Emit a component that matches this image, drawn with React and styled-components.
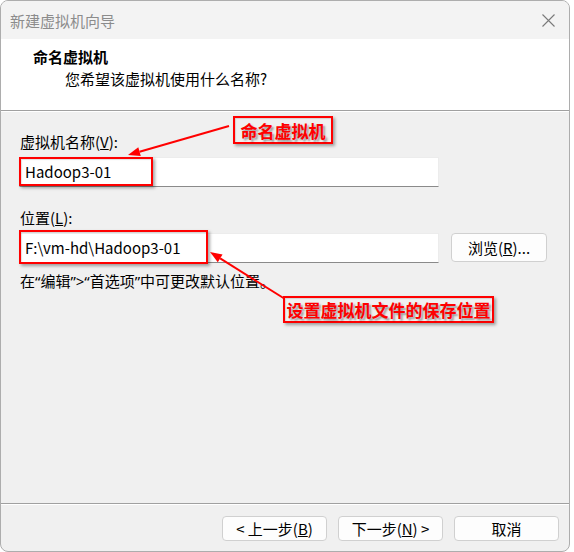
import React from 'react'
import styled, { createGlobalStyle } from 'styled-components'

const GlobalStyle = createGlobalStyle`
  html, body {
    margin: 0;
    padding: 0;
    background: #fff;
  }
  body {
    font-family: "Noto Sans CJK SC", "Noto Sans", sans-serif;
    font-size: 15px;
    color: #000;
  }
`

const FONT = `"Noto Sans CJK SC", "Noto Sans", sans-serif`

const Page = styled.div`
  position: relative;
  width: 574px;
  height: 552px;
`

const Window = styled.div`
  width: 570px;
  height: 552px;
  box-sizing: border-box;
  border: 1px solid #adadad;
  border-radius: 8px;
  overflow: hidden;
  display: flex;
  flex-direction: column;
  background: #f0f0f0;
`

const TitleBar = styled.div`
  height: 38px;
  flex: none;
  display: flex;
  align-items: center;
  justify-content: space-between;
  padding: 0 14px 0 9px;
  background: #f3f3f3;
  color: #8c8c8c;
  font-size: 15px;
`

const Header = styled.div`
  height: 71px;
  flex: none;
  box-sizing: border-box;
  padding: 8px 0 0 32px;
  background: #fff;
  line-height: 20px;

  h1 {
    margin: 0;
    font-size: 15px;
    font-weight: 700;
  }

  p {
    margin: 2px 0 0 32px;
  }
`

const Separator = styled.div`
  height: 2px;
  flex: none;
  box-sizing: border-box;
  border-top: 1px solid #a0a0a0;
  border-bottom: 1px solid #fff;
`

const Body = styled.div`
  flex: 1;
  padding: 20px 0 0 18px;
  line-height: 20px;
`

const Label = styled.div`
  padding-left: 1px;
`

const Row = styled.div`
  display: flex;
  align-items: flex-start;
  gap: 12px;
  margin: 5px 0 ${({ $after }) => $after}px;
`

const Input = styled.div`
  width: 420px;
  height: 30px;
  box-sizing: border-box;
  background: #fff;
  border: 1px solid #ececec;
  border-bottom-color: #8a8a8a;
  padding-left: 5px;
  display: flex;
  align-items: center;
  font-size: 15px;
`

const Button = styled.button`
  width: ${({ $w }) => $w}px;
  height: ${({ $h }) => $h}px;
  box-sizing: border-box;
  background: #fdfdfd;
  border: 1px solid #d0d0d0;
  border-radius: 4px;
  font-family: ${FONT};
  font-size: 15px;
  color: #000;
  padding: 0;
  display: flex;
  align-items: center;
  justify-content: center;
`

/* quotes in the Windows UI font are narrow, so Latin font first here */
const Note = styled.div`
  padding-left: 1px;
  font-family: "Noto Sans", "Noto Sans CJK SC", sans-serif;
`

const Footer = styled.div`
  height: 46px;
  flex: none;
  box-sizing: border-box;
  padding: 11px 10px 0 0;
  display: flex;
  justify-content: flex-end;
  gap: 11px;
`

const RedBox = styled.div`
  position: absolute;
  left: ${({ $x }) => $x}px;
  top: ${({ $y }) => $y}px;
  width: ${({ $w }) => $w}px;
  height: ${({ $h }) => $h}px;
  box-sizing: border-box;
  border: 2px solid #f00;
  box-shadow: 2px 2px 3px rgba(0, 0, 0, 0.35), inset 1px 1px 1px rgba(0, 0, 0, 0.12);
  pointer-events: none;
`

const Callout = styled(RedBox)`
  display: flex;
  align-items: center;
  justify-content: center;
  background: #f0f0f0;
  color: #f00;
  font-family: ${FONT};
  font-size: 17px;
  font-weight: 700;
  line-height: 1;
  text-shadow: 2px 2px 2px rgba(0, 0, 0, 0.35);
  white-space: nowrap;
`

const ArrowLayer = styled.svg`
  position: absolute;
  left: 0;
  top: 0;
  pointer-events: none;
`

function Arrow({ from, to }) {
  const dx = to[0] - from[0]
  const dy = to[1] - from[1]
  const len = Math.hypot(dx, dy)
  const ux = dx / len
  const uy = dy / len
  const bx = to[0] - ux * 12
  const by = to[1] - uy * 12
  const nx = -uy * 4.5
  const ny = ux * 4.5
  return (
    <g>
      <line x1={from[0]} y1={from[1]} x2={bx} y2={by} stroke="#f00" strokeWidth="2" />
      <polygon
        points={`${to[0]},${to[1]} ${bx + nx},${by + ny} ${bx - nx},${by - ny}`}
        fill="#f00"
      />
    </g>
  )
}

function CloseIcon() {
  return (
    <svg width="13" height="13" viewBox="0 0 13 13">
      <path d="M0.5 0.5 L12.5 12.5 M12.5 0.5 L0.5 12.5" stroke="#7a7a7a" strokeWidth="1.1" fill="none" />
    </svg>
  )
}

export default function App() {
  return (
    <>
      <GlobalStyle />
      <Page>
        <Window>
          <TitleBar>
            <span>新建虚拟机向导</span>
            <CloseIcon />
          </TitleBar>
          <Header>
            <h1>命名虚拟机</h1>
            <p>您希望该虚拟机使用什么名称?</p>
          </Header>
          <Separator />
          <Body>
            <Label>虚拟机名称(<u>V</u>):</Label>
            <Row $after={21}>
              <Input>Hadoop3-01</Input>
            </Row>
            <Label>位置(<u>L</u>):</Label>
            <Row $after={8}>
              <Input>F:\vm-hd\Hadoop3-01</Input>
              <Button $w={96} $h={29}>浏览(<u>R</u>)...</Button>
            </Row>
            <Note>在“编辑”&gt;“首选项”中可更改默认位置。</Note>
          </Body>
          <Separator />
          <Footer>
            <Button $w={105} $h={25}>&lt; 上一步(<u>B</u>)</Button>
            <Button $w={105} $h={25}>下一步(<u>N</u>) &gt;</Button>
            <Button $w={105} $h={25}>取消</Button>
          </Footer>
        </Window>

        <RedBox $x={19} $y={157} $w={134} $h={29} />
        <RedBox $x={19} $y={230} $w={189} $h={34} />
        <ArrowLayer width="574" height="552">
          <Arrow from={[229, 126]} to={[128, 155]} />
          <Arrow from={[285, 299]} to={[210, 252]} />
        </ArrowLayer>
        <Callout $x={233} $y={116} $w={100} $h={28}>命名虚拟机</Callout>
        <Callout $x={283} $y={296} $w={211} $h={27}>设置虚拟机文件的保存位置</Callout>
      </Page>
    </>
  )
}
